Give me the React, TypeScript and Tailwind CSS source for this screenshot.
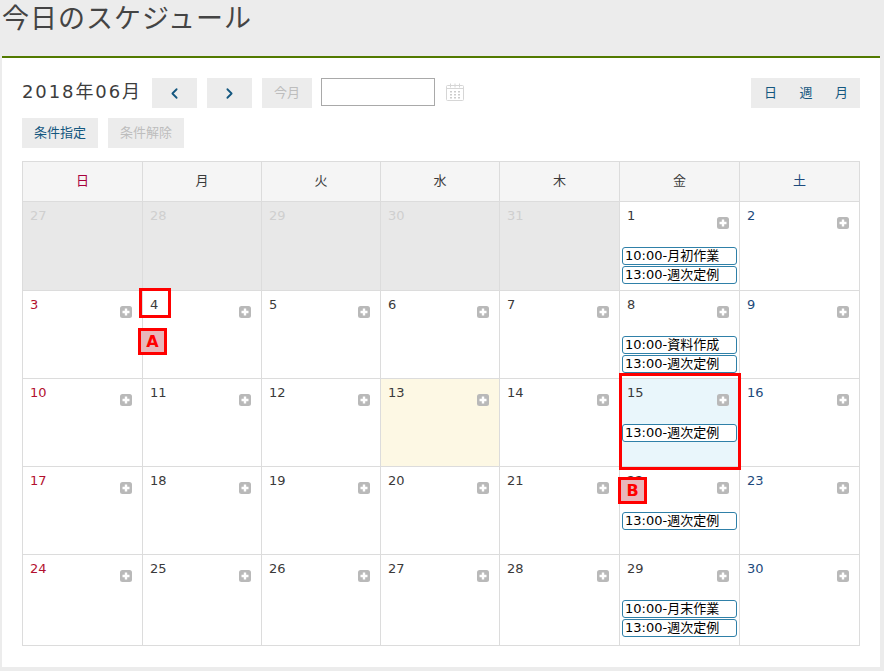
import { ChevronLeft, ChevronRight } from 'lucide-react';

type Day = {
    label: number;
    kind?: 'muted' | 'today' | 'selected';
    events?: string[];
};

const headers = ['日', '月', '火', '水', '木', '金', '土'];
const widths = ['w-[120px]', 'w-[119px]', 'w-[119px]', 'w-[119px]', 'w-[120px]', 'w-[120px]', 'w-[120px]'];

const weeks: { height: string; days: Day[] }[] = [
    {
        height: 'h-[89px]',
        days: [
            { label: 27, kind: 'muted' },
            { label: 28, kind: 'muted' },
            { label: 29, kind: 'muted' },
            { label: 30, kind: 'muted' },
            { label: 31, kind: 'muted' },
            { label: 1, events: ['10:00-月初作業', '13:00-週次定例'] },
            { label: 2 },
        ],
    },
    {
        height: 'h-[88px]',
        days: [
            { label: 3 },
            { label: 4 },
            { label: 5 },
            { label: 6 },
            { label: 7 },
            { label: 8, events: ['10:00-資料作成', '13:00-週次定例'] },
            { label: 9 },
        ],
    },
    {
        height: 'h-[88px]',
        days: [
            { label: 10 },
            { label: 11 },
            { label: 12 },
            { label: 13, kind: 'today' },
            { label: 14 },
            { label: 15, kind: 'selected', events: ['13:00-週次定例'] },
            { label: 16 },
        ],
    },
    {
        height: 'h-[88px]',
        days: [
            { label: 17 },
            { label: 18 },
            { label: 19 },
            { label: 20 },
            { label: 21 },
            { label: 22, events: ['13:00-週次定例'] },
            { label: 23 },
        ],
    },
    {
        height: 'h-[91px]',
        days: [
            { label: 24 },
            { label: 25 },
            { label: 26 },
            { label: 27 },
            { label: 28 },
            { label: 29, events: ['10:00-月末作業', '13:00-週次定例'] },
            { label: 30 },
        ],
    },
];

function PlusIcon() {
    return (
        <svg width="12" height="12" viewBox="0 0 12 12" className="block">
            <rect width="12" height="12" rx="2.5" fill="#b9b9b9" />
            <path d="M6 2.5v7M2.5 6h7" stroke="#fff" strokeWidth="2.4" />
        </svg>
    );
}

function CalendarIcon() {
    return (
        <svg width="20" height="20" viewBox="0 0 20 20" fill="none" className="block">
            <rect x="1.5" y="3.5" width="17" height="15" rx="1" stroke="#d6d6d6" />
            <path d="M1.5 6.5h17" stroke="#d6d6d6" />
            <path d="M5.5 1.5v4M10 1.5v4M14.5 1.5v4" stroke="#d6d6d6" />
            <path
                d="M5 9h2v1.5H5zM9 9h2v1.5H9zM13 9h2v1.5h-2zM5 12h2v1.5H5zM9 12h2v1.5H9zM13 12h2v1.5h-2zM5 15h2v1.5H5zM9 15h2v1.5H9zM13 15h2v1.5h-2z"
                fill="#cccccc"
            />
        </svg>
    );
}

function DayCell({ day, col, width }: { day: Day; col: number; width: string }) {
    let bg = 'bg-white';
    if (day.kind === 'muted') bg = 'bg-[#e8e8e8]';
    if (day.kind === 'today') bg = 'bg-[#fdf8e4]';
    if (day.kind === 'selected') bg = 'bg-[#e9f6fb]';

    let color = 'text-[#3a3a3a]';
    if (col === 0) color = 'text-[#b3102f]';
    if (col === 6) color = 'text-[#1d4a7c]';
    if (day.kind === 'muted') color = 'text-[#cfcfcf]';

    return (
        <div className={`${width} relative shrink-0 border-r border-b border-[#dcdcdc] ${bg}`}>
            <div className={`pt-[5px] pl-[7px] text-[13px] leading-[18px] ${color}`}>{day.label}</div>
            {day.kind !== 'muted' && (
                <div className="-mt-[8px] flex justify-end pr-[10px]">
                    <PlusIcon />
                </div>
            )}
            {day.events && (
                <div className="mt-[18px] flex flex-col gap-[1px] px-[2px]">
                    {day.events.map((text) => (
                        <div
                            key={text}
                            className="h-[18px] overflow-hidden rounded-[3px] border border-[#2f80a8] bg-white pl-[2px] text-[13px] leading-[16px] whitespace-nowrap text-black"
                        >
                            {text}
                        </div>
                    ))}
                </div>
            )}
        </div>
    );
}

export default function App() {
    return (
        <div
            className="h-[671px] w-[884px] overflow-hidden bg-[#ececec] pr-[4px] pl-[2px]"
            style={{ fontFamily: '"DejaVu Sans", "Noto Sans CJK JP", sans-serif' }}
        >
            <h1 className="h-[56px] pt-[4px] text-[27px] leading-[30px] font-normal tracking-[1px] text-[#444]">
                今日のスケジュール
            </h1>
            <main className="h-[611px] border-t-2 border-[#527a00] bg-white px-[20px] pt-[20px]">
                <div className="flex h-[30px] items-start">
                    <span className="w-[130px] text-[18px] leading-[27px] tracking-[1.9px] whitespace-nowrap text-[#3d3d3d]">
                        2018年06月
                    </span>
                    <button className="flex h-[30px] w-[45px] items-center justify-center bg-[#ececec] text-[#14577f]">
                        <ChevronLeft size={17} strokeWidth={2.5} />
                    </button>
                    <button className="ml-[10px] flex h-[30px] w-[45px] items-center justify-center bg-[#ececec] text-[#14577f]">
                        <ChevronRight size={17} strokeWidth={2.5} />
                    </button>
                    <button className="ml-[10px] h-[30px] w-[50px] bg-[#ececec] text-[13px] text-[#bdbdbd]">今月</button>
                    <input className="ml-[9px] h-[28px] w-[114px] border border-[#a9a9a9] bg-white" />
                    <span className="mt-[4px] ml-[10px]">
                        <CalendarIcon />
                    </span>
                    <div className="ml-auto flex h-[30px] w-[109px] items-center justify-between bg-[#ececec] pr-[12px] pl-[13px] text-[13px] text-[#14577f]">
                        <span>日</span>
                        <span>週</span>
                        <span>月</span>
                    </div>
                </div>
                <div className="mt-[10px] flex gap-[10px]">
                    <button className="h-[30px] w-[76px] bg-[#ececec] text-[13px] text-[#14577f]">条件指定</button>
                    <button className="h-[30px] w-[76px] bg-[#ececec] text-[13px] text-[#bdbdbd]">条件解除</button>
                </div>
                <div className="relative mt-[13px] w-[838px] border-t border-l border-[#dcdcdc]">
                    <div className="flex h-[40px]">
                        {headers.map((h, i) => (
                            <div
                                key={h}
                                className={`${widths[i]} flex shrink-0 items-center justify-center border-r border-b border-[#dcdcdc] bg-[#f5f5f5] pb-[2px] text-[13px] ${
                                    i === 0 ? 'text-[#a8003c]' : i === 6 ? 'text-[#1d4a7c]' : 'text-[#3a3a3a]'
                                }`}
                            >
                                {h}
                            </div>
                        ))}
                    </div>
                    {weeks.map((week) => (
                        <div key={week.days[0].label} className={`flex ${week.height}`}>
                            {week.days.map((day, col) => (
                                <DayCell key={col} day={day} col={col} width={widths[col]} />
                            ))}
                        </div>
                    ))}

                    {/* annotations on top of the calendar */}
                    <div className="absolute top-[126px] left-[116px] h-[30px] w-[32px] border-[3px] border-[#ff0000]" />
                    <div className="absolute top-[166px] left-[115px] flex h-[27px] w-[29px] items-center justify-center border-[3px] border-[#ff0000] bg-[#e8b6ba] text-[16px] font-bold text-[#ff0000]">
                        A
                    </div>
                    <div className="absolute top-[211px] left-[596px] h-[97px] w-[122px] border-[3px] border-[#ff0000]" />
                    <div className="absolute top-[315px] left-[595px] flex h-[27px] w-[29px] items-center justify-center border-[3px] border-[#ff0000] bg-[#e8b6ba] text-[16px] font-bold text-[#ff0000]">
                        B
                    </div>
                </div>
            </main>
        </div>
    );
}
